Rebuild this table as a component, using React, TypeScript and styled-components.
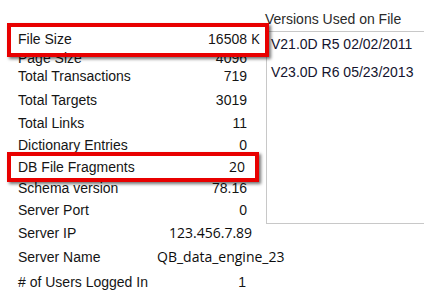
import styled, { createGlobalStyle } from "styled-components";

const GlobalStyle = createGlobalStyle`
  html, body {
    margin: 0;
    padding: 0;
    background: #ffffff;
  }
  body {
    font-family: "Liberation Sans", Arial, sans-serif;
    width: 424px;
    height: 302px;
    overflow: hidden;
  }
`;

const Page = styled.div`
  display: flex;
  width: 424px;
  height: 302px;
  background: #ffffff;
`;

const StatsColumn = styled.div`
  display: flex;
  flex-direction: column;
  width: 247px;
  padding-left: 18px;
  flex-shrink: 0;
`;

const Row = styled.div<{ $space: number; $frameW?: number; $frameH?: number; $frameTop?: number }>`
  position: relative;
  display: flex;
  height: 18px;
  line-height: 18px;
  margin-top: ${(p) => p.$space}px;
  font-size: 14px;
  color: #151515;
  white-space: nowrap;

  ${(p) =>
    p.$frameW
      ? `
    &::after {
      content: "";
      position: absolute;
      left: -11px;
      top: ${p.$frameTop}px;
      width: ${p.$frameW}px;
      height: ${p.$frameH}px;
      box-sizing: border-box;
      border: 4px solid #e80000;
      box-shadow: 2px 2px 3px rgba(0, 0, 0, 0.55);
      pointer-events: none;
      z-index: 2;
    }
  `
      : ""}
`;

const Label = styled.span`
  width: 139px;
  flex-shrink: 0;
`;

const Value = styled.span<{ $align?: "left" | "right"; $pad?: number; $alt?: boolean }>`
  width: 90px;
  flex-shrink: 0;
  box-sizing: border-box;
  text-align: ${(p) => p.$align || "right"};
  padding-left: ${(p) => (p.$align === "left" ? p.$pad || 0 : 0)}px;
  padding-right: ${(p) => (p.$align === "left" ? 0 : p.$pad || 0)}px;
  font-family: ${(p) => (p.$alt ? '"Open Sans", "Noto Sans", sans-serif' : "inherit")};
  font-size: 14px;
  color: ${(p) => (p.$alt ? "#0c0c0c" : "inherit")};
  overflow: visible;
`;

const Unit = styled.span`
  margin-left: 4px;
  font-family: "Open Sans", "Noto Sans", sans-serif;
  font-size: 14px;
  color: #0c0c0c;
`;

const VersionsColumn = styled.div`
  display: flex;
  flex-direction: column;
  flex: 1;
  min-width: 0;
`;

const VersionsTitle = styled.div`
  height: 21px;
  padding-top: 10px;
  line-height: 18px;
  font-size: 14px;
  color: #2a2a2a;
  white-space: nowrap;
`;

const VersionsList = styled.div`
  display: flex;
  flex-direction: column;
  gap: 10px;
  height: 188px;
  margin-left: 1px;
  padding: 3px 0 0 4px;
  border-top: 1px solid #c8c8c8;
  border-left: 1px solid #c8c8c8;
  border-bottom: 1px solid #c8c8c8;
`;

const VersionItem = styled.div`
  height: 18px;
  line-height: 18px;
  font-size: 14px;
  color: #14142e;
  white-space: nowrap;
`;

interface Stat {
  label: string;
  value: string;
  space: number;
  align?: "left" | "right";
  pad?: number;
  alt?: boolean;
  unit?: string;
  frame?: { w: number; h: number; top: number };
}

const stats: Stat[] = [
  { label: "File Size", value: "16508", space: 30, unit: "K", frame: { w: 262, h: 34, top: -7 } },
  { label: "Page Size", value: "4096", space: 1 },
  { label: "Total Transactions", value: "719", space: 0 },
  { label: "Total Targets", value: "3019", space: 6 },
  { label: "Total Links", value: "11", space: 5 },
  { label: "Dictionary Entries", value: "0", space: 4 },
  { label: "DB File Fragments", value: "20", space: 4, alt: true, pad: 2, frame: { w: 252, h: 30, top: -6 } },
  { label: "Schema version", value: "78.16", space: 3 },
  { label: "Server Port", value: "0", space: 4 },
  { label: "Server IP", value: "123.456.7.89", space: 5, align: "left", pad: 12, alt: true },
  { label: "Server Name", value: "QB_data_engine_23", space: 6, align: "left", pad: 0, alt: true },
  { label: "# of Users Logged In", value: "1", space: 7, pad: 1 },
];

const versions = ["V21.0D R5 02/02/2011", "V23.0D R6 05/23/2013"];

export default function App() {
  return (
    <>
      <GlobalStyle />
      <Page>
        <StatsColumn>
          {stats.map((s) => (
            <Row
              key={s.label}
              $space={s.space}
              $frameW={s.frame?.w}
              $frameH={s.frame?.h}
              $frameTop={s.frame?.top}
            >
              <Label>{s.label}</Label>
              <Value $align={s.align} $pad={s.pad} $alt={s.alt}>
                {s.value}
              </Value>
              {s.unit && <Unit>{s.unit}</Unit>}
            </Row>
          ))}
        </StatsColumn>
        <VersionsColumn>
          <VersionsTitle>Versions Used on File</VersionsTitle>
          <VersionsList>
            {versions.map((v) => (
              <VersionItem key={v}>{v}</VersionItem>
            ))}
          </VersionsList>
        </VersionsColumn>
      </Page>
    </>
  );
}
